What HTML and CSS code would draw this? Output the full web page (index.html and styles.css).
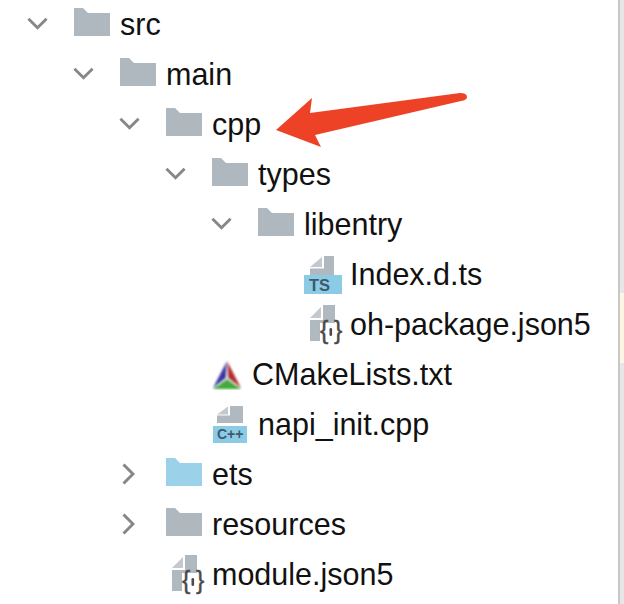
FILE: index.html

```html
<!DOCTYPE html>
<html lang="en">
<head>
  <meta charset="UTF-8">
  <meta name="viewport" content="width=device-width, initial-scale=1.0">
  <link rel="stylesheet" href="styles.css">
  <title>Project Tree</title>
</head>
<body>

<svg class="icon-defs" width="0" height="0">
  <defs>
    <symbol id="chevron-down" viewBox="0 0 22 13">
      <path d="M1.5 1.5 L11 11 L20.5 1.5" fill="none" stroke="#878787" stroke-width="3"/>
    </symbol>
    <symbol id="chevron-right" viewBox="0 0 13 22">
      <path d="M1.5 1.5 L11 11 L1.5 20.5" fill="none" stroke="#878787" stroke-width="3"/>
    </symbol>
    <symbol id="folder" viewBox="0 0 36 28">
      <path d="M0 0 H9 L14 5 H36 V28 H0 Z"/>
    </symbol>
    <symbol id="file-ts" viewBox="0 0 38 38">
      <path d="M6 11 L18 1 V11 Z" fill="#c3c9ce"/>
      <path d="M20 0 H30 V19 H6 V12.5 H20 Z" fill="#b0b8c0"/>
      <rect x="0" y="19" width="38" height="19" fill="#8ccbe6"/>
      <text x="5" y="35" class="badge-text">TS</text>
    </symbol>
    <symbol id="file-cpp" viewBox="0 0 36 40">
      <path d="M5 9.5 L16 1.5 V9.5 Z" fill="#c3c9ce"/>
      <path d="M18 1 H31 V18 H5 V10.5 H18 Z" fill="#b0b8c0"/>
      <rect x="1" y="21" width="34" height="17" fill="#8ccbe6"/>
      <text x="5" y="34" class="badge-text badge-small">C++</text>
    </symbol>
    <symbol id="file-json" viewBox="0 0 34 40">
      <path d="M1 13 L12 2 V13 Z" fill="#c3c9ce"/>
      <path d="M14 0 H26 V15 H14 Z M1 15 H26 V18 H11 V36 H1 Z" fill="#b0b8c0"/>
      <text x="11" y="34" class="badge-brace">{</text>
      <text x="25" y="34" class="badge-brace">}</text>
      <rect x="20.5" y="23" width="2.6" height="8" rx="1.3" fill="#4a4a4a"/>
    </symbol>
  </defs>
</svg>

<ul class="tree">
  <li class="row depth-0"><svg class="chevron"><use href="#chevron-down"/></svg><svg class="folder"><use href="#folder"/></svg><span class="label">src</span></li>
  <li class="row depth-1"><svg class="chevron"><use href="#chevron-down"/></svg><svg class="folder"><use href="#folder"/></svg><span class="label">main</span></li>
  <li class="row depth-2"><svg class="chevron"><use href="#chevron-down"/></svg><svg class="folder"><use href="#folder"/></svg><span class="label">cpp</span></li>
  <li class="row depth-3"><svg class="chevron"><use href="#chevron-down"/></svg><svg class="folder"><use href="#folder"/></svg><span class="label">types</span></li>
  <li class="row depth-4"><svg class="chevron"><use href="#chevron-down"/></svg><svg class="folder"><use href="#folder"/></svg><span class="label">libentry</span></li>
  <li class="row depth-file-ts"><svg class="file-icon"><use href="#file-ts"/></svg><span class="label">Index.d.ts</span></li>
  <li class="row depth-file-json"><svg class="json-icon"><use href="#file-json"/></svg><span class="label">oh-package.json5</span></li>
  <li class="row depth-cmake">
    <svg class="cmake-icon" viewBox="0 0 30 30">
      <defs>
        <filter id="soft"><feGaussianBlur stdDeviation="0.9"/></filter>
      </defs>
      <g filter="url(#soft)">
        <path d="M15 1 L1 28 L14 18 Z" fill="#3a38a4"/>
        <path d="M15 1 L29 28 L16 18 Z" fill="#b22f30"/>
        <path d="M1 29 L15 19 L29 29 Z" fill="#42ab3a"/>
        <path d="M15 1 L15 18 M15 18 L5 26 M15 18 L25 26" stroke="#ddd" stroke-width="0.8" fill="none"/>
      </g>
    </svg>
    <span class="label">CMakeLists.txt</span>
  </li>
  <li class="row depth-cpp"><svg class="cpp-icon"><use href="#file-cpp"/></svg><span class="label">napi_init.cpp</span></li>
  <li class="row depth-2"><svg class="chevron chevron-closed"><use href="#chevron-right"/></svg><svg class="folder folder-blue"><use href="#folder"/></svg><span class="label">ets</span></li>
  <li class="row depth-2"><svg class="chevron chevron-closed"><use href="#chevron-right"/></svg><svg class="folder"><use href="#folder"/></svg><span class="label">resources</span></li>
  <li class="row depth-module"><svg class="json-icon"><use href="#file-json"/></svg><span class="label">module.json5</span></li>
</ul>

<!-- scrollbar gutter with the highlighted stretch -->
<div class="gutter">
  <div class="gutter-mark"></div>
</div>

<!-- annotation arrow -->
<svg class="arrow" viewBox="0 0 192 56">
  <path d="M0 39 L36 7 L34 22 L184 2 Q191 2 191 6 Q191 9 185 10 L39 44 L45 56 Z" fill="#ee4227"/>
</svg>

</body>
</html>
```

FILE: styles.css

```css
body {
  margin: 0;
  height: 604px;
  overflow: hidden;
  position: relative;
  display: flex;
  background-color: #fff;
  font-family: "Liberation Sans", Arial, sans-serif;
  font-size: 30.5px;
  color: #111;
}

.icon-defs {
  position: absolute;
}

.tree {
  flex: 1;
  list-style: none;
  margin: 0;
  padding: 0;
}

.row {
  height: 50px;
  display: flex;
  align-items: center;
}

.label {
  margin-top: -2px;
}

.depth-0 { padding-left: 27px; }
.depth-1 { padding-left: 73px; }
.depth-2 { padding-left: 119px; }
.depth-3 { padding-left: 165px; }
.depth-4 { padding-left: 211px; }
.depth-file-ts { padding-left: 304px; }
.depth-file-json { padding-left: 309px; }
.depth-cmake { padding-left: 212px; }
.depth-cpp { padding-left: 212px; }
.depth-module { padding-left: 171px; }

.chevron {
  width: 21px;
  height: 13px;
  margin-right: 26px;
  margin-top: -3px;
}

.chevron-closed {
  width: 13px;
  height: 22px;
  margin-left: 3px;
  margin-right: 31px;
  margin-top: -2px;
}

.folder {
  width: 36px;
  height: 28px;
  fill: #afb7bf;
  margin-right: 10px;
  margin-top: -6px;
}

.folder-blue {
  fill: #9bd2ea;
}

.file-icon {
  width: 38px;
  height: 38px;
  margin-right: 8px;
}

.json-icon {
  width: 34px;
  height: 40px;
  margin-right: 7px;
}

.cmake-icon {
  width: 30px;
  height: 30px;
  margin-right: 10px;
}

.cpp-icon {
  width: 36px;
  height: 40px;
  margin-right: 10px;
}

.badge-text {
  font-family: "Liberation Sans", Arial, sans-serif;
  font-size: 16.5px;
  font-weight: bold;
  fill: #3e5a6c;
}

.badge-small {
  font-size: 14px;
}

.badge-brace {
  font-family: "Liberation Sans", Arial, sans-serif;
  font-size: 25px;
  fill: #4a4a4a;
  stroke: #4a4a4a;
  stroke-width: 0.4;
}

.gutter {
  width: 4px;
  border-left: 2px solid #c8c8c8;
  background-color: #e6e6e6;
}

.gutter-mark {
  height: 70px;
  margin-top: 293px;
  background-color: #fdf6e3;
}

.arrow {
  position: absolute;
  left: 276px;
  top: 91px;
  width: 192px;
  height: 56px;
}
```
